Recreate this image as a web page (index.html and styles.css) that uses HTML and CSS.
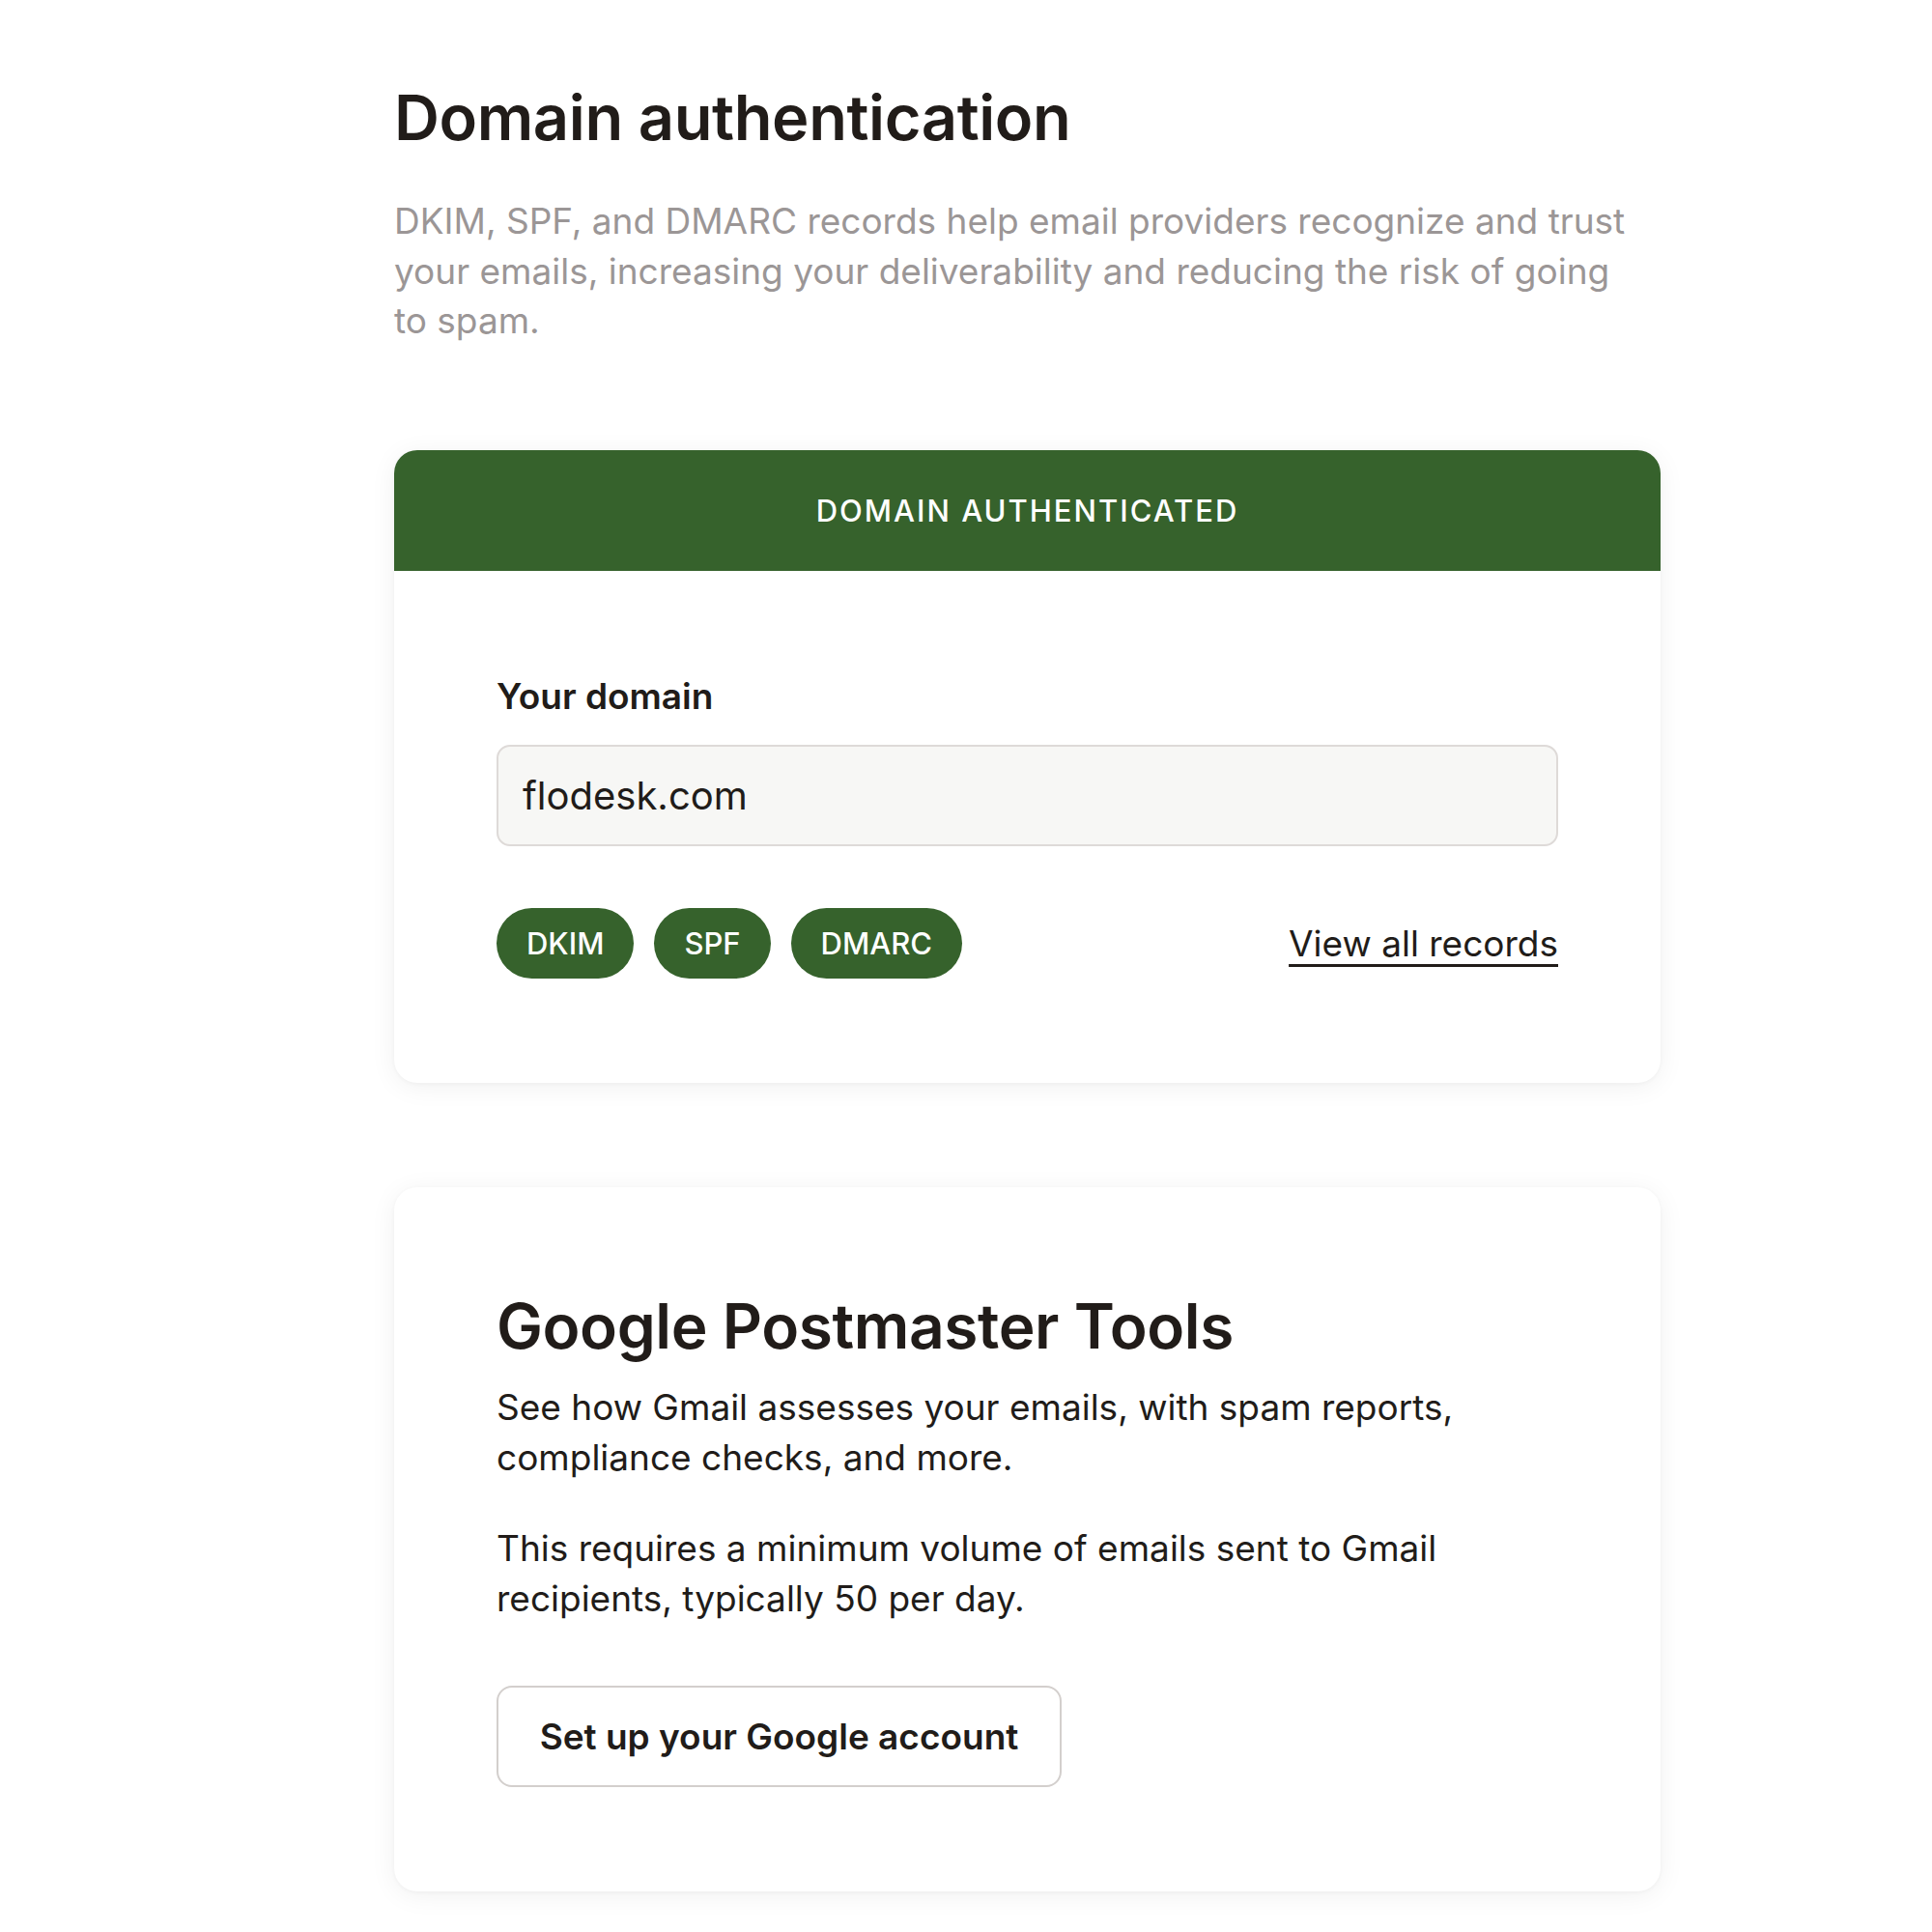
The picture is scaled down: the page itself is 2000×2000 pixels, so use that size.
FILE: index.html
```html
<!DOCTYPE html>
<html lang="en">
<head>
    <meta charset="UTF-8">
    <meta name="viewport" content="width=device-width, initial-scale=1.0">
    <title>Domain authentication</title>
    <link rel="stylesheet" href="styles.css">
</head>
<body>
<main class="settings">
    <h1 class="page-title">Domain authentication</h1>
    <p class="page-intro">DKIM, SPF, and DMARC records help email providers recognize and trust your emails, increasing your deliverability and reducing the risk of going to spam.</p>

    <section class="card">
        <div class="card-banner">DOMAIN AUTHENTICATED</div>
        <div class="card-body">
            <label class="field-label" for="domain">Your domain</label>
            <input class="field-input" id="domain" type="text" value="flodesk.com" readonly>
            <div class="records">
                <div class="record-tags">
                    <span class="tag">DKIM</span>
                    <span class="tag">SPF</span>
                    <span class="tag">DMARC</span>
                </div>
                <a class="records-link" href="#">View all records</a>
            </div>
        </div>
    </section>

    <section class="card card-postmaster">
        <div class="card-body">
            <h2 class="card-title">Google Postmaster Tools</h2>
            <p class="card-text">See how Gmail assesses your emails, with spam reports, compliance checks, and more.</p>
            <p class="card-text">This requires a minimum volume of emails sent to Gmail recipients, typically 50 per day.</p>
            <button class="btn-outline" type="button">Set up your Google account</button>
        </div>
    </section>
</main>
</body>
</html>
```

FILE: styles.css
```css
* {
    box-sizing: border-box;
    margin: 0;
    padding: 0;
}

body {
    background-color: #ffffff;
    color: #211c19;
    font-family: 'Inter', 'Liberation Sans', Arial, sans-serif;
}

.settings {
    width: 1311px;
    margin-left: 408px;
    padding-top: 84px;
    padding-bottom: 60px;
}

.page-title {
    font-size: 65px;
    font-weight: 600;
    line-height: 76px;
    letter-spacing: -0.4px;
}

.page-intro {
    max-width: 1295px;
    margin-top: 43px;
    font-size: 37px;
    line-height: 51.5px;
    color: #9b9696;
}

.card {
    margin-top: 108px;
    background-color: #ffffff;
    border-radius: 24px;
    box-shadow: 0 4px 28px rgba(0, 0, 0, 0.06), 0 1px 4px rgba(0, 0, 0, 0.04);
    overflow: hidden;
}

.card-banner {
    height: 125px;
    display: flex;
    align-items: center;
    justify-content: center;
    background-color: #36622c;
    color: #ffffff;
    font-size: 31px;
    font-weight: 500;
    letter-spacing: 2px;
}

.card-body {
    padding: 106px 106px 108px;
}

.card .card-banner + .card-body {
    padding-top: 110px;
}

.field-label {
    display: block;
    font-size: 37px;
    font-weight: 600;
    line-height: 40px;
}

.field-input {
    display: block;
    width: 100%;
    height: 105px;
    margin-top: 30px;
    padding: 0 25px;
    background-color: #f7f7f5;
    border: 2px solid #dedad8;
    border-radius: 14px;
    color: #211c19;
    font-family: inherit;
    font-size: 40px;
    outline: none;
}

.records {
    display: flex;
    align-items: center;
    justify-content: space-between;
    margin-top: 64px;
}

.record-tags {
    display: flex;
    gap: 21px;
}

.tag {
    display: flex;
    align-items: center;
    height: 73px;
    padding: 0 31px;
    border-radius: 37px;
    background-color: #36622c;
    color: #ffffff;
    font-size: 31px;
    font-weight: 500;
}

.records-link {
    color: #211c19;
    font-size: 37px;
    text-decoration: underline;
    text-decoration-thickness: 3px;
    text-underline-offset: 8px;
}

.card-postmaster {
    margin-top: 108px;
}

.card-title {
    font-size: 64px;
    font-weight: 600;
    line-height: 76px;
    letter-spacing: -0.4px;
}

.card-text {
    margin-top: 42px;
    font-size: 37px;
    line-height: 52px;
}

.card-title + .card-text {
    margin-top: 20px;
}

.btn-outline {
    display: block;
    width: 585px;
    height: 105px;
    margin-top: 64px;
    background-color: #ffffff;
    border: 2px solid #d3cfcd;
    border-radius: 16px;
    color: #211c19;
    font-family: inherit;
    font-size: 37px;
    font-weight: 600;
    cursor: pointer;
}
```
